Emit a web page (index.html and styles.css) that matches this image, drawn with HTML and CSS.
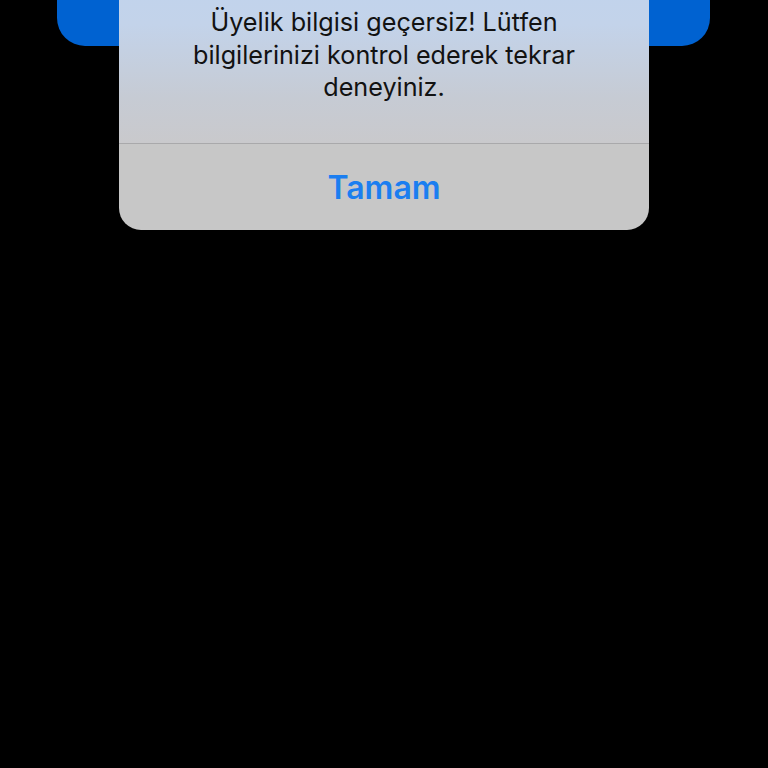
FILE: index.html
```html
<!DOCTYPE html>
<html lang="tr">
<head>
<meta charset="utf-8">
<link rel="stylesheet" href="styles.css">
</head>
<body>
<div class="screen">
  <div class="blue-card"></div>
  <div class="alert">
    <div class="alert-message">Üyelik bilgisi geçersiz! Lütfen<br>bilgilerinizi kontrol ederek tekrar<br>deneyiniz.</div>
    <div class="alert-button">Tamam</div>
  </div>
</div>
</body>
</html>
```
FILE: styles.css
```css
html, body {
  margin: 0;
  padding: 0;
  background: #000;
}
.screen {
  position: relative;
  width: 768px;
  height: 768px;
  overflow: hidden;
  background: #000;
  font-family: Inter, "Noto Sans", sans-serif;
}
.blue-card {
  margin: 0 58px 0 57px;
  height: 46px;
  background: #0062d1;
  border-radius: 0 0 28px 28px;
}
.alert {
  position: absolute;
  left: 119px;
  top: -40px;
  width: 530px;
  border-radius: 22px;
  overflow: hidden;
  background: #c7c7c7;
}
.alert-message {
  padding: 46px 20px 39.5px;
  text-align: center;
  font-size: 25.2px;
  line-height: 32.5px;
  color: #121212;
  background: linear-gradient(to bottom, #c0d3ee 0%, #c3d3ea 35%, #c6cbd4 75%, #c9c9cc 100%);
  border-bottom: 1px solid #a9a9ab;
}
.alert-button {
  height: 86px;
  display: flex;
  align-items: center;
  justify-content: center;
  font-size: 32px;
  font-weight: 600;
  color: #1b7ef0;
}
```
